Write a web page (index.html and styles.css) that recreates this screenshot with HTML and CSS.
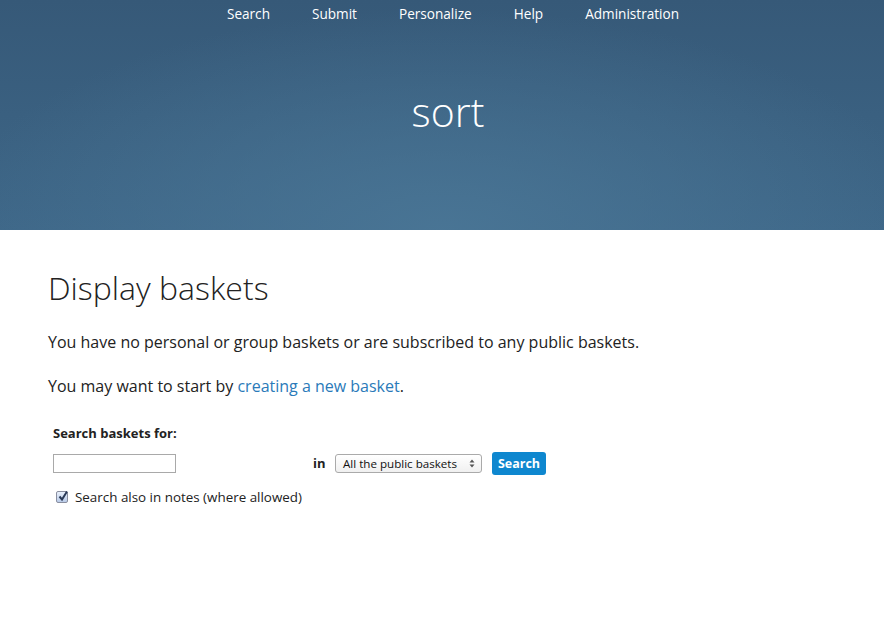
FILE: index.html
```html
<!DOCTYPE html>
<html>
<head>
<meta charset="utf-8">
<link rel="stylesheet" href="styles.css">
</head>
<body>
<header class="hero">
  <nav class="nav">
    <a href="#">Search</a>
    <a href="#">Submit</a>
    <a href="#">Personalize</a>
    <a href="#">Help</a>
    <a href="#">Administration</a>
  </nav>
  <h1 class="hero-title">sort</h1>
</header>
<main class="content">
  <h2 class="page-title">Display baskets</h2>
  <p class="text">You have no personal or group baskets or are subscribed to any public baskets.</p>
  <p class="text">You may want to start by <a class="link" href="#">creating a new basket</a>.</p>
  <form class="search-form">
    <div class="form-label">Search baskets for:</div>
    <div class="form-row">
      <input class="text-input" type="text">
      <span class="in-label">in</span>
      <div class="select">All the public baskets<span class="arrows"><svg width="6" height="9" viewBox="0 0 6 9"><path d="M3 0.5L5.5 3.5H0.5Z M3 8.5L5.5 5.5H0.5Z" fill="#555"/></svg></span></div>
      <button class="btn" type="button">Search</button>
    </div>
    <label class="check-row">
      <span class="checkbox"><svg width="12" height="12" viewBox="0 0 12 12"><path d="M2.5 6.5L5 9.5L10 1.5" fill="none" stroke="#2b3a57" stroke-width="2"/></svg></span>
      Search also in notes (where allowed)
    </label>
  </form>
</main>
</body>
</html>
```

FILE: styles.css
```css
html, body {
  margin: 0;
  padding: 0;
  background: #fff;
}
body {
  font-family: "Open Sans", "Liberation Sans", sans-serif;
  color: #222;
}
.hero {
  height: 230px;
  background:
    radial-gradient(ellipse 70% 120% at 50% 100%, rgba(74,118,150,0.9) 0%, rgba(74,118,150,0) 80%),
    linear-gradient(180deg, #365978 0%, #3e6788 100%);
  display: flex;
  flex-direction: column;
  align-items: center;
}
.nav {
  display: flex;
  padding-left: 22px;
  gap: 42px;
  height: 27px;
  align-items: center;
}
.nav a {
  color: #fff;
  text-decoration: none;
  font-size: 13.6px;
}
.hero-title {
  margin: 59px 0 0 12px;
  font-weight: 300;
  font-size: 41px;
  line-height: 50px;
  color: #fff;
}
.content {
  padding: 0 48px;
}
.page-title {
  margin: 37px 0 0;
  font-weight: 300;
  font-size: 32px;
  line-height: 42px;
  color: #222;
}
.text {
  font-size: 16px;
  line-height: 22px;
  margin: 22px 0 0;
}
.text + .text {
  margin-top: 22px;
}
.link {
  color: #2a7ab9;
  text-decoration: none;
}
.search-form {
  margin: 27px 0 0 5px;
  font-size: 13px;
}
.form-label {
  font-weight: 700;
  line-height: 18px;
}
.form-row {
  display: flex;
  align-items: center;
  margin-top: 9px;
  height: 24px;
}
.text-input {
  box-sizing: border-box;
  width: 123px;
  height: 19px;
  border: 1px solid #a9a9a9;
  margin: 0;
  padding: 0;
}
.in-label {
  font-weight: 700;
  margin-left: 137px;
  width: 22px;
}
.select {
  box-sizing: border-box;
  width: 147px;
  height: 19px;
  border: 1px solid #aaa;
  border-radius: 3px;
  background: linear-gradient(#fff, #f0f0f0);
  font-size: 11.6px;
  line-height: 17px;
  padding-left: 7px;
  display: flex;
  justify-content: space-between;
  color: #111;
}
.arrows {
  display: flex;
  align-items: center;
  padding-right: 6px;
}
.btn {
  margin-left: 10px;
  width: 54px;
  height: 23px;
  border: none;
  border-radius: 3px;
  background: #0e87cf;
  color: #fff;
  font-family: "Open Sans", "Liberation Sans", sans-serif;
  font-weight: 700;
  font-size: 12.5px;
  padding: 0;
}
.check-row {
  display: flex;
  align-items: center;
  margin-top: 13px;
  line-height: 18px;
  font-size: 13.4px;
}
.checkbox {
  box-sizing: border-box;
  width: 12px;
  height: 12px;
  border: 1px solid #8a8fa0;
  border-radius: 2px;
  background: linear-gradient(#e9f0fb, #b9cbe8);
  margin: 0 7px 0 3px;
  display: flex;
  position: relative;
}
.checkbox svg {
  position: absolute;
  left: 0;
  top: -2px;
}
```
